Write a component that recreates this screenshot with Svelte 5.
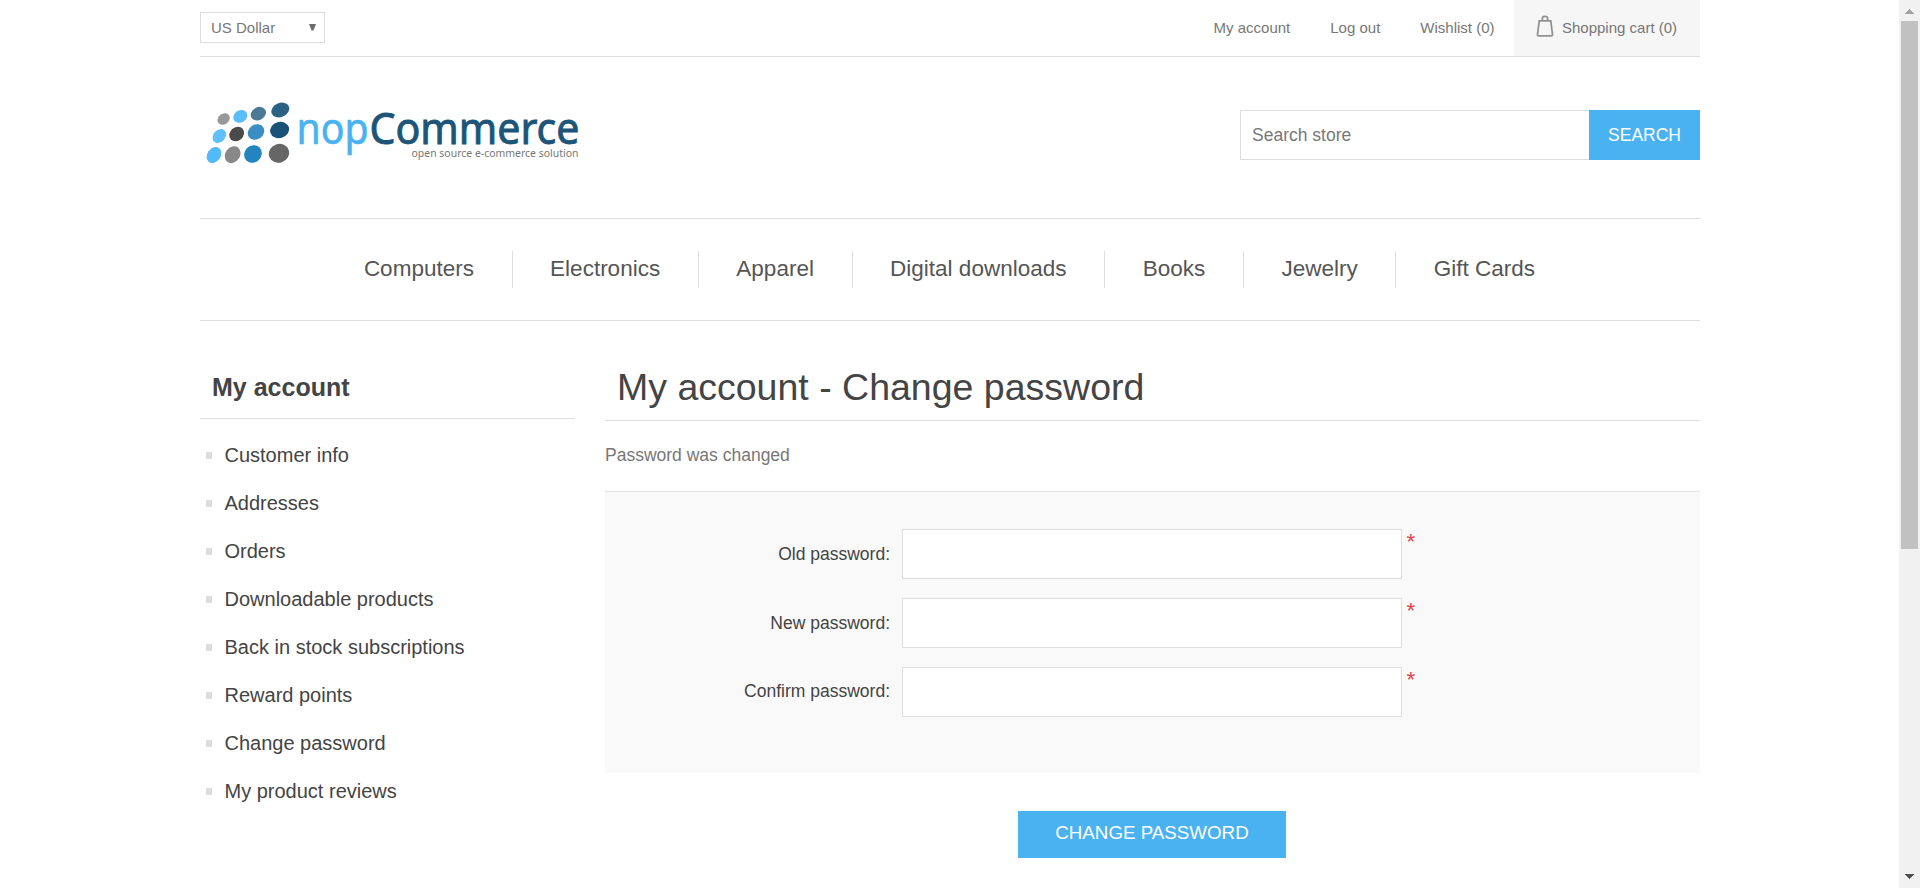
<script>
  const links = ['My account', 'Log out', 'Wishlist (0)'];
  const categories = ['Computers', 'Electronics', 'Apparel', 'Digital downloads', 'Books', 'Jewelry', 'Gift Cards'];
  const account = [
    'Customer info', 'Addresses', 'Orders', 'Downloadable products',
    'Back in stock subscriptions', 'Reward points', 'Change password', 'My product reviews'
  ];
  const fields = ['Old password:', 'New password:', 'Confirm password:'];
  // cx, cy, rx, ry, rotation, colour
  const dots = [
    [71, 72, 20, 16, -38, '#98989a'], [121, 64, 22, 18, -32, '#5cbdfb'],
    [175, 56, 24, 19, -30, '#4c7a96'], [241, 45, 28, 21, -22, '#2b6183'],
    [58, 123, 23, 18, -48, '#5fc0fe'], [110, 117, 24, 20, -42, '#4a4a4a'],
    [168, 111, 26, 22, -35, '#398ec4'], [239, 105, 29, 24, -16, '#1a5277'],
    [42, 180, 26, 20, -55, '#52b9fa'], [98, 179, 27, 22, -55, '#888888'],
    [159, 177, 28, 25, -45, '#2384c0'], [237, 175, 31, 28, -18, '#666666']
  ];
</script>

<div class="window">
  <div class="page">
    <header>
      <div class="upper">
        <div class="currency"><span>US Dollar</span>
          <svg width="7" height="7" viewBox="0 0 7 7"><path d="M0 0H7L4.4 6.5H2.6Z" fill="#6c6c6c" /></svg>
        </div>
        <nav class="links">
          {#each links as link}<a href="#top">{link}</a>{/each}
          <a class="cart" href="#top">
            <svg width="18" height="24" viewBox="0 0 18 24" fill="none" stroke="#929292" stroke-width="1.8">
              <path d="M3.2 6.8H14.8L16.5 20.5Q16.6 21.8 15.4 21.8H2.6Q1.4 21.8 1.5 20.5Z" />
              <path d="M6.4 6.4V4.2Q6.4 2.4 9 2.4T11.6 4.2V6.4" />
            </svg>
            <span>Shopping cart (0)</span>
          </a>
        </nav>
      </div>
      <div class="lower">
        <svg class="logo" width="400" height="75" viewBox="0 0 400 75">
          {#each dots as [x, y, rx, ry, r, c]}
            <ellipse rx={rx / 3} ry={ry / 3} fill={c} transform="translate({x / 3} {y / 3}) rotate({r})" />
          {/each}
          <text x="96.5" y="48.8" font-size="43.5" fill="#4ab2f1" stroke="#4ab2f1" stroke-width="0.7" textLength="72" lengthAdjust="spacingAndGlyphs">nop</text>
          <text x="169.5" y="48.8" font-size="43.5" fill="#1c5578" stroke="#1c5578" stroke-width="0.9" textLength="210" lengthAdjust="spacingAndGlyphs">Commerce</text>
          <text x="211.5" y="61.5" font-size="11.5" fill="#777" textLength="167" lengthAdjust="spacingAndGlyphs">open source e-commerce solution</text>
        </svg>
        <div class="search">
          <input type="text" placeholder="Search store" />
          <button>SEARCH</button>
        </div>
      </div>
    </header>

    <nav class="menu">
      {#each categories as category}<a href="#top">{category}</a>{/each}
    </nav>

    <div class="columns">
      <aside>
        <h2>My account</h2>
        <ul>
          {#each account as item}<li><a href="#top">{item}</a></li>{/each}
        </ul>
      </aside>
      <main>
        <h1>My account - Change password</h1>
        <p>Password was changed</p>
        <div class="fieldset">
          {#each fields as field}
            <label><span class="name">{field}</span><input type="password" /><span class="required">*</span></label>
          {/each}
        </div>
        <button class="submit">CHANGE PASSWORD</button>
      </main>
    </div>
  </div>

  <div class="scrollbar">
    <svg width="21" height="21"><path d="M10 9h1v1h1v1h1v1h1v1h1v1H6v-1h1v-1h1v-1h1v-1h1z" fill="#a3a3a3" /></svg>
    <div class="thumb"></div>
    <svg class="down" width="21" height="21"><path d="M6 7h9v1h-1v1h-1v1h-1v1h-1v1h-1v-1H9v-1H8V9H7V8H6z" fill="#505050" /></svg>
  </div>
</div>

<style>
  :global(body) { margin: 0; background: #fff; overflow: hidden; }
  * { box-sizing: border-box; }
  .window {
    display: flex; width: 1920px; height: 888px; overflow: hidden;
    font: 17.5px "Liberation Sans", Arial, sans-serif; color: #777;
  }
  a { color: inherit; text-decoration: none; }
  button, input { font: inherit; border-radius: 0; }
  button { border: 0; padding: 0; background: #4ab2f1; color: #fff; }
  input { border: 1px solid #ddd; outline: 0; background: #fff; }
  .page { width: 1500px; margin-left: 200px; flex: none; }
  .upper {
    display: flex; justify-content: space-between; height: 57px;
    border-bottom: 1px solid #ddd; font-size: 15px;
  }
  .currency {
    display: flex; align-items: center; justify-content: space-between;
    width: 125px; height: 31px; margin-top: 12px; padding: 0 8.5px 0 10px; border: 1px solid #ddd;
  }
  .currency svg { margin-top: -1px; }
  .links { display: flex; line-height: 56px; }
  .links a { margin-right: 40px; }
  .links a:nth-child(3) { margin-right: 19.5px; }
  .links .cart {
    display: flex; align-items: center; width: 186px; margin: 0; padding-left: 22px;
    background: #f6f6f6; gap: 8px;
  }
  .cart svg { margin-top: -4px; }
  .lower { display: flex; justify-content: space-between; height: 161px; padding-top: 38px; }
  .logo { font-family: "Noto Sans", "Open Sans", sans-serif; }
  .search { display: flex; width: 460px; height: 50px; margin-top: 15px; }
  .search input { width: 349px; padding: 0 11px; border-right: 0; }
  .search input::placeholder { color: #777; opacity: 1; }
  .search button { flex: 1; }
  .menu {
    display: flex; justify-content: center; align-items: center; height: 103px;
    border: solid #ddd; border-width: 1px 0; padding-right: 1px; font-size: 22.5px; color: #555;
  }
  .menu a { height: 37px; line-height: 36px; padding: 0 37.6px; border-right: 1px solid #ddd; }
  .menu a:last-child { border: 0; }
  .columns { display: flex; gap: 30px; color: #444; }
  aside { width: 375px; }
  h2 {
    margin: 0; height: 98px; padding: 51px 0 0 12px; border-bottom: 1px solid #ddd;
    font-size: 25px; line-height: 30px;
  }
  ul { list-style: none; margin: 0; padding: 12px 0 0 6px; font-size: 20px; }
  li { display: flex; align-items: center; height: 48px; gap: 12.5px; }
  li::before { content: ""; width: 6px; height: 7px; background: #ddd; }
  main { display: flex; flex-direction: column; width: 1095px; }
  h1 {
    margin: 0; height: 100px; padding: 44px 0 0 12px; border-bottom: 1px solid #ddd;
    font-size: 37.5px; line-height: 44px; font-weight: 400;
  }
  p { margin: 0; height: 70px; line-height: 68px; color: #777; }
  .fieldset {
    display: flex; flex-direction: column; gap: 19px; height: 282px; padding-top: 37px;
    border-top: 1px solid #e5e5e5; background: #f9f9f9;
  }
  label { display: flex; height: 50px; line-height: 50px; }
  label:last-child .name { line-height: 48px; }
  .name { width: 285px; text-align: right; }
  label input { width: 500px; margin-left: 12px; }
  .required { margin-left: 4.5px; line-height: 26px; font-size: 22.5px; color: #e4434b; }
  .submit { align-self: center; width: 268px; height: 47px; margin: 38px 1px 0 0; padding-bottom: 3px; font-size: 18.75px; }
  .scrollbar { display: flex; flex-direction: column; width: 21px; height: 888px; margin-left: auto; background: #f1f1f1; }
  .scrollbar svg { display: block; flex: none; }
  .thumb { width: 17px; height: 528px; margin-left: 2px; background: #c1c1c1; }
  .down { margin-top: auto; }
</style>
